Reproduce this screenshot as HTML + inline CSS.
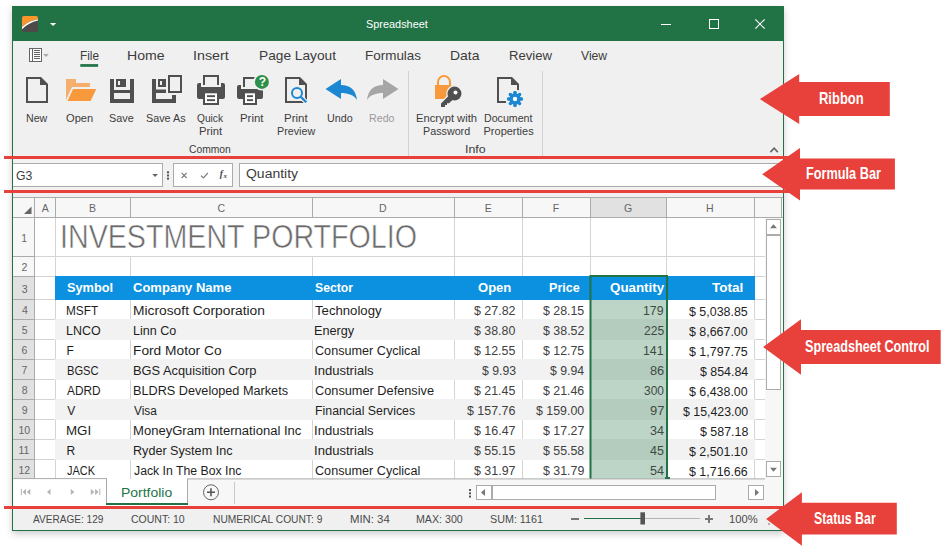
<!DOCTYPE html>
<html lang="en"><head><meta charset="utf-8"><title>Spreadsheet</title>
<style>
html,body{margin:0;padding:0;background:#fff;}
body{width:944px;height:550px;position:relative;overflow:hidden;font-family:"Liberation Sans",sans-serif;}
.t{position:absolute;white-space:pre;transform-origin:0 0;}
.r{position:absolute;}
svg{position:absolute;left:0;top:0;overflow:visible;}
</style></head><body>
<div class="r" style="left:12px;top:6px;width:772px;height:525px;background:#f0f0f0;box-shadow:0 3px 7px rgba(0,0,0,0.2);"></div>
<div class="r" style="left:12px;top:6px;width:772px;height:35px;background:#217346;"></div>
<div class="r" style="left:12px;top:41px;width:1px;height:490px;background:#217346;"></div>
<div class="r" style="left:783px;top:41px;width:1px;height:490px;background:#217346;"></div>
<div class="r" style="left:12px;top:530px;width:772px;height:1px;background:#217346;"></div>
<div id="titlebar">
<span class="t" style="left:365.81px;top:19.25px;font-size:11.4px;line-height:11.4px;color:#ffffff;transform:scaleX(0.9568);">Spreadsheet</span>
</div><div id="ribbon">
<span class="t" style="left:79.56px;top:48.76px;font-size:13.4px;line-height:13.4px;color:#3c3c3c;transform:scaleX(0.8794);">File</span>
<span class="t" style="left:127.17px;top:48.76px;font-size:13.4px;line-height:13.4px;color:#3c3c3c;transform:scaleX(1.0518);">Home</span>
<span class="t" style="left:193.11px;top:48.76px;font-size:13.4px;line-height:13.4px;color:#3c3c3c;transform:scaleX(1.0674);">Insert</span>
<span class="t" style="left:258.60px;top:48.76px;font-size:13.4px;line-height:13.4px;color:#3c3c3c;transform:scaleX(1.0243);">Page Layout</span>
<span class="t" style="left:365.32px;top:48.76px;font-size:13.4px;line-height:13.4px;color:#3c3c3c;transform:scaleX(1.0048);">Formulas</span>
<span class="t" style="left:450.28px;top:48.76px;font-size:13.4px;line-height:13.4px;color:#3c3c3c;transform:scaleX(1.0440);">Data</span>
<span class="t" style="left:508.95px;top:48.76px;font-size:13.4px;line-height:13.4px;color:#3c3c3c;transform:scaleX(0.9795);">Review</span>
<span class="t" style="left:581.34px;top:48.76px;font-size:13.4px;line-height:13.4px;color:#3c3c3c;transform:scaleX(0.9080);">View</span>
<svg width="944" height="550"><rect x="80.3" y="64.1" width="17.8" height="2.7" fill="#217346"/></svg>
<span class="t" style="left:25.75px;top:113.09px;font-size:11px;line-height:11px;color:#3c3c3c;transform:scaleX(0.9681);">New</span>
<span class="t" style="left:66.10px;top:113.09px;font-size:11px;line-height:11px;color:#3c3c3c;transform:scaleX(1.0084);">Open</span>
<span class="t" style="left:108.81px;top:113.09px;font-size:11px;line-height:11px;color:#3c3c3c;transform:scaleX(0.9838);">Save</span>
<span class="t" style="left:146.11px;top:113.09px;font-size:11px;line-height:11px;color:#3c3c3c;transform:scaleX(0.9825);">Save As</span>
<span class="t" style="left:197.34px;top:113.09px;font-size:11px;line-height:11px;color:#3c3c3c;transform:scaleX(0.9272);">Quick</span>
<span class="t" style="left:198.60px;top:126.09px;font-size:11px;line-height:11px;color:#3c3c3c;transform:scaleX(1.0245);">Print</span>
<span class="t" style="left:240.49px;top:113.09px;font-size:11px;line-height:11px;color:#3c3c3c;transform:scaleX(1.0383);">Print</span>
<span class="t" style="left:284.48px;top:113.09px;font-size:11px;line-height:11px;color:#3c3c3c;transform:scaleX(1.0429);">Print</span>
<span class="t" style="left:276.74px;top:126.09px;font-size:11px;line-height:11px;color:#3c3c3c;transform:scaleX(0.9770);">Preview</span>
<span class="t" style="left:326.69px;top:113.09px;font-size:11px;line-height:11px;color:#3c3c3c;transform:scaleX(0.9790);">Undo</span>
<span class="t" style="left:415.50px;top:113.09px;font-size:11px;line-height:11px;color:#3c3c3c;transform:scaleX(1.0189);">Encrypt with</span>
<span class="t" style="left:422.54px;top:126.09px;font-size:11px;line-height:11px;color:#3c3c3c;transform:scaleX(0.9765);">Password</span>
<span class="t" style="left:483.85px;top:113.09px;font-size:11px;line-height:11px;color:#3c3c3c;transform:scaleX(0.9660);">Document</span>
<span class="t" style="left:483.52px;top:126.09px;font-size:11px;line-height:11px;color:#3c3c3c;">Properties</span>
<span class="t" style="left:189.18px;top:144.09px;font-size:11px;line-height:11px;color:#3c3c3c;transform:scaleX(0.9368);">Common</span>
<span class="t" style="left:464.89px;top:144.09px;font-size:11px;line-height:11px;color:#3c3c3c;transform:scaleX(1.1253);">Info</span>
<span class="t" style="left:368.85px;top:113.09px;font-size:11px;line-height:11px;color:#9a9a9a;transform:scaleX(0.9692);">Redo</span>
<div class="r" style="left:408px;top:71px;width:1px;height:85px;background:#d2d2d2;"></div>
<div class="r" style="left:542px;top:71px;width:1px;height:85px;background:#d2d2d2;"></div>
<svg width="944" height="550"><g><clipPath id="lg"><rect x="22" y="16" width="16" height="16" rx="1.8"/></clipPath><g clip-path="url(#lg)"><rect x="21" y="15" width="18" height="18" fill="#4d4b4a"/><path d="M21,15 H39 V19.2 Q27.5,21 21,28 Z" fill="#f8952b"/><path d="M21,28 Q27.5,21 39,19.1 V20.3 Q28.5,22.2 21,30.2 Z" fill="#fff"/></g></g><path d="M50,23 H56.2 L53.1,26.1 Z" fill="#fff"/><g stroke="#fff" stroke-width="1" fill="none"><path d="M661,24.5 H671"/><rect x="709.5" y="19.5" width="9" height="9"/><path d="M755.3,19.3 L764.7,28.7 M764.7,19.3 L755.3,28.7" stroke-width="1.1"/></g><g><rect x="29.5" y="48.5" width="12" height="13" fill="#fff" stroke="#666" stroke-width="1"/><rect x="32" y="49" width="1" height="12" fill="#666"/><rect x="34" y="50" width="6" height="1" fill="#666"/><rect x="34" y="52" width="6" height="1" fill="#666"/><rect x="34" y="54" width="6" height="1" fill="#666"/><rect x="34" y="56" width="6" height="1" fill="#666"/><rect x="34" y="58" width="6" height="1" fill="#666"/><path d="M43.2,54 H48.8 L46,57 Z" fill="#a8a8a8"/></g><path d="M26,77 H41 L48,84 V103 H26 Z" fill="#505050"/><path d="M28,79 H40 V85 H46 V101 H28 Z" fill="#f0f0f0"/><path d="M66,79 H76 V83 H90 V87 H72 L66,100 Z" fill="#f5ae6c"/><path d="M73,89 H96.3 L90.6,101 H67.5 Z" fill="#f89a3c"/><rect x="110" y="79" width="24" height="24" fill="#505050"/><g fill="#f0f0f0"><rect x="114" y="79" width="2" height="11"/><rect x="126" y="79" width="4" height="11"/><rect x="116" y="87" width="10" height="3"/><rect x="118" y="81" width="2" height="4"/><rect x="114" y="93" width="16" height="6"/></g><g fill="#505050"><rect x="152" y="79" width="4" height="24"/><rect x="158" y="79" width="8" height="8"/><rect x="152" y="89.5" width="14" height="3.5"/><rect x="152" y="99" width="24" height="4"/><rect x="172" y="95" width="4" height="8"/></g><rect x="160" y="81" width="2" height="4" fill="#f0f0f0"/><rect x="169" y="76" width="12" height="16" fill="#f0f0f0" stroke="#505050" stroke-width="2"/><path d="M204,85 V76 H218 V85" fill="none" stroke="#505050" stroke-width="2"/><path d="M199,83 H201 V87 H221 V83 H223 a2,2 0 0 1 2,2 V97 a2,2 0 0 1 -2,2 H199 a2,2 0 0 1 -2,-2 V85 a2,2 0 0 1 2,-2 Z" fill="#505050"/><rect x="203" y="93" width="16" height="12" fill="#505050"/><rect x="205" y="93.3" width="12" height="9.7" fill="#fff"/><rect x="207" y="95.2" width="8" height="1.9" fill="#505050"/><rect x="207" y="99.2" width="8" height="1.9" fill="#505050"/><path d="M244,87 V78 H258" fill="none" stroke="#505050" stroke-width="2"/><path d="M239,85 H241 V89 H263 V97 a2,2 0 0 1 -2,2 H239 a2,2 0 0 1 -2,-2 V87 a2,2 0 0 1 2,-2 Z" fill="#505050"/><rect x="243" y="93" width="14" height="12" fill="#505050"/><rect x="245" y="93.3" width="10" height="9.7" fill="#fff"/><rect x="247" y="95.2" width="6" height="1.9" fill="#505050"/><rect x="247" y="99.2" width="6" height="1.9" fill="#505050"/><circle cx="261.9" cy="81.9" r="8.6" fill="#f0f0f0"/><circle cx="261.9" cy="81.9" r="7" fill="#2e9048"/><path d="M285,77 H300 L307,84 V103 H285 Z" fill="#505050"/><path d="M287,79 H299 V85 H305 V101 H287 Z" fill="#f0f0f0"/><g fill="none" stroke="#f0f0f0" stroke-width="4.6"><circle cx="297" cy="93" r="5"/><path d="M300.7,96.7 L306.3,102.3" stroke-linecap="round"/></g><g fill="none" stroke="#1c87d2" stroke-width="2"><circle cx="297" cy="93" r="5" fill="#f0f0f0"/><path d="M300.7,96.7 L306.3,102.3" stroke-width="2.3"/></g><path d="M325.5,89 L341,79 V85 C350,85 356,90 357,100 C354,95 348,93 341,93 V99 Z" fill="#1c87d2"/><path d="M325.5,89 L341,79 V85 C350,85 356,90 357,100 C354,95 348,93 341,93 V99 Z" fill="#a6a6a6" transform="translate(724,0) scale(-1,1)"/><rect x="435" y="85" width="16.5" height="14" fill="#f89a3c"/><path d="M438,86 V82 a6,6 0 0 1 12,0 V86" fill="none" stroke="#f89a3c" stroke-width="2"/><g fill="#f0f0f0" stroke="#f0f0f0" stroke-width="2.6"><circle cx="454.5" cy="93.6" r="7"/><path d="M441,107 V103.5 L449.5,95 L453.5,99 L449,103.3 H447 V105 H445 V107 Z"/></g><g fill="#505050"><circle cx="454.5" cy="93.6" r="7"/><path d="M441,107 V103.5 L449.5,95 L453.5,99 L449,103.3 H447 V105 H445 V107 Z"/></g><circle cx="455.5" cy="92.4" r="2" fill="#fff"/><path d="M497,77 H512 L519,84 V103 H497 Z" fill="#505050"/><path d="M499,79 H511 V85 H517 V101 H499 Z" fill="#f0f0f0"/><circle cx="515" cy="99" r="9.6" fill="#f0f0f0"/><g fill="#1c87d2"><rect x="513.5" y="91" width="3" height="16" rx="1.2" transform="rotate(0 515 99)"/><rect x="513.5" y="91" width="3" height="16" rx="1.2" transform="rotate(45 515 99)"/><rect x="513.5" y="91" width="3" height="16" rx="1.2" transform="rotate(90 515 99)"/><rect x="513.5" y="91" width="3" height="16" rx="1.2" transform="rotate(135 515 99)"/><rect x="513.5" y="91" width="3" height="16" rx="1.2" transform="rotate(180 515 99)"/><rect x="513.5" y="91" width="3" height="16" rx="1.2" transform="rotate(225 515 99)"/><rect x="513.5" y="91" width="3" height="16" rx="1.2" transform="rotate(270 515 99)"/><rect x="513.5" y="91" width="3" height="16" rx="1.2" transform="rotate(315 515 99)"/><circle cx="515" cy="99" r="5.8"/></g><circle cx="515" cy="99" r="2.2" fill="#fff"/><path d="M770.4,152.1 L774.1,148.2 L777.8,152.1" fill="none" stroke="#666" stroke-width="1.6"/></svg>
<span class="t" style="left:258.76px;top:76.04px;font-size:12px;line-height:12px;color:#fff;font-weight:bold;">?</span>
</div><div id="formula-bar">
<div class="r" style="left:13px;top:159px;width:770px;height:31px;background:#f2f2f2;"></div>
<div class="r" style="left:13px;top:163px;width:150px;height:24px;background:#fff;border:1px solid #ababab;border-left:none;box-sizing:border-box;"></div>
<div class="r" style="left:173px;top:163px;width:60px;height:24px;background:#fff;border:1px solid #ababab;box-sizing:border-box;"></div>
<div class="r" style="left:239px;top:163px;width:544px;height:24px;background:#fff;border:1px solid #ababab;border-right:none;box-sizing:border-box;"></div>
<span class="t" style="left:16.39px;top:169.84px;font-size:12px;line-height:12px;color:#3c3c3c;transform:scaleX(1.0174);">G3</span>
<svg width="944" height="550"><path d="M152.2,174 H158 L155.1,177 Z" fill="#666"/><g fill="#555"><rect x="167" y="171.3" width="2" height="2"/><rect x="167" y="174.5" width="2" height="2"/><rect x="167" y="177.6" width="2" height="2"/></g><g fill="none" stroke="#7c7c7c" stroke-width="1.15"><path d="M181.6,172.9 L186.7,178 M186.7,172.9 L181.6,178"/><path d="M201,175.6 L203.4,178 L207.9,173"/></g></svg>
<span class="t" style="left:219.8px;top:169.3px;font-size:9.5px;line-height:10px;color:#444;font-family:'Liberation Serif',serif;font-style:italic;font-weight:bold;">f</span>
<span class="t" style="left:223.4px;top:172.2px;font-size:7px;line-height:8px;color:#444;font-family:'Liberation Serif',serif;font-style:italic;font-weight:bold;">x</span>
<span class="t" style="left:245.77px;top:167.59px;font-size:12.3px;line-height:12.3px;color:#3c3c3c;transform:scaleX(1.1356);">Quantity</span>
</div><div id="spreadsheet">
<div class="r" style="left:13px;top:193px;width:770px;height:4px;background:#f0f0f0;"></div>
<div class="r" style="left:13px;top:197px;width:770px;height:282px;background:#ffffff;"></div>
<div class="r" style="left:13px;top:197px;width:770px;height:1px;background:#ababab;"></div>
<div class="r" style="left:13px;top:198px;width:769px;height:19px;background:#f7f7f7;"></div>
<div class="r" style="left:13px;top:217px;width:21px;height:262px;background:#f7f7f7;"></div>
<div class="r" style="left:591px;top:198px;width:75px;height:19px;background:#e1e1e1;"></div>
<div class="r" style="left:13px;top:277px;width:21px;height:202px;background:#e1e1e1;"></div>
<div class="r" style="left:13px;top:217px;width:770px;height:1px;background:#ababab;"></div>
<div class="r" style="left:34px;top:198px;width:1px;height:281px;background:#ababab;"></div>
<div class="r" style="left:781px;top:197px;width:1px;height:21px;background:#ababab;"></div>
<div class="r" style="left:765px;top:218px;width:18px;height:261px;background:#f7f7f7;"></div>
<div class="r" style="left:55px;top:198px;width:1px;height:19px;background:#ababab;"></div>
<div class="r" style="left:55px;top:218px;width:1px;height:261px;background:#d4d4d4;"></div>
<div class="r" style="left:130px;top:198px;width:1px;height:19px;background:#ababab;"></div>
<div class="r" style="left:130px;top:218px;width:1px;height:261px;background:#d4d4d4;"></div>
<div class="r" style="left:312px;top:198px;width:1px;height:19px;background:#ababab;"></div>
<div class="r" style="left:312px;top:218px;width:1px;height:261px;background:#d4d4d4;"></div>
<div class="r" style="left:454px;top:198px;width:1px;height:19px;background:#ababab;"></div>
<div class="r" style="left:454px;top:218px;width:1px;height:261px;background:#d4d4d4;"></div>
<div class="r" style="left:522px;top:198px;width:1px;height:19px;background:#ababab;"></div>
<div class="r" style="left:522px;top:218px;width:1px;height:261px;background:#d4d4d4;"></div>
<div class="r" style="left:590px;top:198px;width:1px;height:19px;background:#ababab;"></div>
<div class="r" style="left:590px;top:218px;width:1px;height:261px;background:#d4d4d4;"></div>
<div class="r" style="left:666px;top:198px;width:1px;height:19px;background:#ababab;"></div>
<div class="r" style="left:666px;top:218px;width:1px;height:261px;background:#d4d4d4;"></div>
<div class="r" style="left:754px;top:198px;width:1px;height:19px;background:#ababab;"></div>
<div class="r" style="left:754px;top:218px;width:1px;height:261px;background:#d4d4d4;"></div>
<div class="r" style="left:35px;top:256px;width:730px;height:1px;background:#d4d4d4;"></div>
<div class="r" style="left:13px;top:256px;width:21px;height:1px;background:#ababab;"></div>
<div class="r" style="left:35px;top:276px;width:730px;height:1px;background:#d4d4d4;"></div>
<div class="r" style="left:13px;top:276px;width:21px;height:1px;background:#ababab;"></div>
<div class="r" style="left:35px;top:299px;width:730px;height:1px;background:#d4d4d4;"></div>
<div class="r" style="left:13px;top:299px;width:21px;height:1px;background:#ababab;"></div>
<div class="r" style="left:35px;top:319px;width:730px;height:1px;background:#d4d4d4;"></div>
<div class="r" style="left:13px;top:319px;width:21px;height:1px;background:#ababab;"></div>
<div class="r" style="left:35px;top:339px;width:730px;height:1px;background:#d4d4d4;"></div>
<div class="r" style="left:13px;top:339px;width:21px;height:1px;background:#ababab;"></div>
<div class="r" style="left:35px;top:359px;width:730px;height:1px;background:#d4d4d4;"></div>
<div class="r" style="left:13px;top:359px;width:21px;height:1px;background:#ababab;"></div>
<div class="r" style="left:35px;top:379px;width:730px;height:1px;background:#d4d4d4;"></div>
<div class="r" style="left:13px;top:379px;width:21px;height:1px;background:#ababab;"></div>
<div class="r" style="left:35px;top:399px;width:730px;height:1px;background:#d4d4d4;"></div>
<div class="r" style="left:13px;top:399px;width:21px;height:1px;background:#ababab;"></div>
<div class="r" style="left:35px;top:419px;width:730px;height:1px;background:#d4d4d4;"></div>
<div class="r" style="left:13px;top:419px;width:21px;height:1px;background:#ababab;"></div>
<div class="r" style="left:35px;top:439px;width:730px;height:1px;background:#d4d4d4;"></div>
<div class="r" style="left:13px;top:439px;width:21px;height:1px;background:#ababab;"></div>
<div class="r" style="left:35px;top:459px;width:730px;height:1px;background:#d4d4d4;"></div>
<div class="r" style="left:13px;top:459px;width:21px;height:1px;background:#ababab;"></div>
<div class="r" style="left:56px;top:218px;width:360px;height:38px;background:#ffffff;"></div>
<div class="r" style="left:55px;top:276px;width:700px;height:24px;background:#0c90e0;"></div>
<div class="r" style="left:55px;top:319px;width:700px;height:21px;background:#f2f2f2;"></div>
<div class="r" style="left:55px;top:359px;width:700px;height:21px;background:#f2f2f2;"></div>
<div class="r" style="left:55px;top:399px;width:700px;height:21px;background:#f2f2f2;"></div>
<div class="r" style="left:55px;top:439px;width:700px;height:21px;background:#f2f2f2;"></div>
<span class="t" style="left:41.85px;top:202.51px;font-size:10.5px;line-height:10.5px;color:#666666;">A</span>
<span class="t" style="left:88.91px;top:202.51px;font-size:10.5px;line-height:10.5px;color:#666666;">B</span>
<span class="t" style="left:217.47px;top:202.51px;font-size:10.5px;line-height:10.5px;color:#666666;">C</span>
<span class="t" style="left:378.91px;top:202.51px;font-size:10.5px;line-height:10.5px;color:#666666;">D</span>
<span class="t" style="left:484.66px;top:202.51px;font-size:10.5px;line-height:10.5px;color:#666666;">E</span>
<span class="t" style="left:552.66px;top:202.51px;font-size:10.5px;line-height:10.5px;color:#666666;">F</span>
<span class="t" style="left:624.08px;top:202.51px;font-size:10.5px;line-height:10.5px;color:#666666;">G</span>
<span class="t" style="left:705.91px;top:202.51px;font-size:10.5px;line-height:10.5px;color:#666666;">H</span>
<svg width="944" height="550"><path d="M31.5,206.5 V214 H24 Z" fill="#666"/></svg>
<span class="t" style="left:21.31px;top:232.61px;font-size:10.5px;line-height:10.5px;color:#666666;">1</span>
<span class="t" style="left:21.58px;top:261.61px;font-size:10.5px;line-height:10.5px;color:#666666;">2</span>
<span class="t" style="left:21.68px;top:283.61px;font-size:10.5px;line-height:10.5px;color:#666666;">3</span>
<span class="t" style="left:21.89px;top:304.81px;font-size:10.5px;line-height:10.5px;color:#666666;">4</span>
<span class="t" style="left:21.68px;top:324.81px;font-size:10.5px;line-height:10.5px;color:#666666;">5</span>
<span class="t" style="left:21.58px;top:344.81px;font-size:10.5px;line-height:10.5px;color:#666666;">6</span>
<span class="t" style="left:21.58px;top:364.81px;font-size:10.5px;line-height:10.5px;color:#666666;">7</span>
<span class="t" style="left:21.63px;top:384.81px;font-size:10.5px;line-height:10.5px;color:#666666;">8</span>
<span class="t" style="left:21.63px;top:404.81px;font-size:10.5px;line-height:10.5px;color:#666666;">9</span>
<span class="t" style="left:18.41px;top:424.81px;font-size:10.5px;line-height:10.5px;color:#666666;">10</span>
<span class="t" style="left:18.41px;top:444.81px;font-size:10.5px;line-height:10.5px;color:#666666;">11</span>
<span class="t" style="left:18.41px;top:464.81px;font-size:10.5px;line-height:10.5px;color:#666666;">12</span>
<span class="t" style="left:60.42px;top:219.57px;font-size:33px;line-height:33px;color:#6a6a6a;-webkit-text-stroke:0.55px #fff;transform-origin:0 0;transform:scaleX(0.8679);">INVESTMENT PORTFOLIO</span>
<span class="t" style="left:67.22px;top:282.34px;font-size:12px;line-height:12px;color:#ffffff;transform:scaleX(1.0645);font-weight:bold;">Symbol</span>
<span class="t" style="left:133.18px;top:282.34px;font-size:12px;line-height:12px;color:#ffffff;transform:scaleX(1.0851);font-weight:bold;">Company Name</span>
<span class="t" style="left:315.13px;top:282.34px;font-size:12px;line-height:12px;color:#ffffff;transform:scaleX(1.0179);font-weight:bold;">Sector</span>
<span class="t" style="left:478.08px;top:282.34px;font-size:12px;line-height:12px;color:#ffffff;transform:scaleX(1.0862);font-weight:bold;">Open</span>
<span class="t" style="left:548.88px;top:282.34px;font-size:12px;line-height:12px;color:#ffffff;transform:scaleX(1.0483);font-weight:bold;">Price</span>
<span class="t" style="left:609.97px;top:282.34px;font-size:12px;line-height:12px;color:#ffffff;transform:scaleX(1.1118);font-weight:bold;">Quantity</span>
<span class="t" style="left:711.66px;top:282.34px;font-size:12px;line-height:12px;color:#ffffff;transform:scaleX(1.1260);font-weight:bold;">Total</span>
<span class="t" style="left:66.46px;top:304.74px;font-size:12px;line-height:12px;color:#1e1e1e;transform:scaleX(0.9828);">MSFT</span>
<span class="t" style="left:132.60px;top:304.74px;font-size:12px;line-height:12px;color:#1e1e1e;transform:scaleX(1.1498);">Microsoft Corporation</span>
<span class="t" style="left:315.24px;top:304.74px;font-size:12px;line-height:12px;color:#1e1e1e;transform:scaleX(1.0962);">Technology</span>
<span class="t" style="left:474.38px;top:304.74px;font-size:12px;line-height:12px;color:#404040;transform:scaleX(1.0356);">$ 27.82</span>
<span class="t" style="left:542.68px;top:304.74px;font-size:12px;line-height:12px;color:#404040;transform:scaleX(1.0299);">$ 28.15</span>
<span class="t" style="left:689.38px;top:305.74px;font-size:12px;line-height:12px;color:#1e1e1e;transform:scaleX(1.0357);">$ 5,038.85</span>
<span class="t" style="left:66.40px;top:324.74px;font-size:12px;line-height:12px;color:#1e1e1e;transform:scaleX(1.0377);">LNCO</span>
<span class="t" style="left:132.70px;top:324.74px;font-size:12px;line-height:12px;color:#1e1e1e;transform:scaleX(1.0451);">Linn Co</span>
<span class="t" style="left:314.49px;top:324.74px;font-size:12px;line-height:12px;color:#1e1e1e;transform:scaleX(1.0572);">Energy</span>
<span class="t" style="left:474.38px;top:324.74px;font-size:12px;line-height:12px;color:#404040;transform:scaleX(1.0309);">$ 38.80</span>
<span class="t" style="left:542.68px;top:324.74px;font-size:12px;line-height:12px;color:#404040;transform:scaleX(1.0331);">$ 38.52</span>
<span class="t" style="left:689.38px;top:325.74px;font-size:12px;line-height:12px;color:#1e1e1e;transform:scaleX(1.0345);">$ 8,667.00</span>
<span class="t" style="left:66.44px;top:344.74px;font-size:12px;line-height:12px;color:#1e1e1e;">F</span>
<span class="t" style="left:132.60px;top:344.74px;font-size:12px;line-height:12px;color:#1e1e1e;transform:scaleX(1.1449);">Ford Motor Co</span>
<span class="t" style="left:314.87px;top:344.74px;font-size:12px;line-height:12px;color:#1e1e1e;transform:scaleX(1.0523);">Consumer Cyclical</span>
<span class="t" style="left:474.38px;top:344.74px;font-size:12px;line-height:12px;color:#404040;transform:scaleX(1.0325);">$ 12.55</span>
<span class="t" style="left:542.68px;top:344.74px;font-size:12px;line-height:12px;color:#404040;transform:scaleX(1.0299);">$ 12.75</span>
<span class="t" style="left:689.38px;top:345.74px;font-size:12px;line-height:12px;color:#1e1e1e;transform:scaleX(1.0357);">$ 1,797.75</span>
<span class="t" style="left:66.51px;top:364.74px;font-size:12px;line-height:12px;color:#1e1e1e;transform:scaleX(0.9300);">BGSC</span>
<span class="t" style="left:132.67px;top:364.74px;font-size:12px;line-height:12px;color:#1e1e1e;transform:scaleX(1.0690);">BGS Acquisition Corp</span>
<span class="t" style="left:314.32px;top:364.74px;font-size:12px;line-height:12px;color:#1e1e1e;transform:scaleX(1.0898);">Industrials</span>
<span class="t" style="left:481.58px;top:364.74px;font-size:12px;line-height:12px;color:#404040;transform:scaleX(1.0226);">$ 9.93</span>
<span class="t" style="left:549.58px;top:364.74px;font-size:12px;line-height:12px;color:#404040;transform:scaleX(1.0249);">$ 9.94</span>
<span class="t" style="left:699.78px;top:365.74px;font-size:12px;line-height:12px;color:#1e1e1e;transform:scaleX(1.0325);">$ 854.84</span>
<span class="t" style="left:67.40px;top:384.74px;font-size:12px;line-height:12px;color:#1e1e1e;transform:scaleX(0.9874);">ADRD</span>
<span class="t" style="left:132.69px;top:384.74px;font-size:12px;line-height:12px;color:#1e1e1e;transform:scaleX(1.0565);">BLDRS Developed Markets</span>
<span class="t" style="left:314.86px;top:384.74px;font-size:12px;line-height:12px;color:#1e1e1e;transform:scaleX(1.0624);">Consumer Defensive</span>
<span class="t" style="left:474.38px;top:384.74px;font-size:12px;line-height:12px;color:#404040;transform:scaleX(1.0325);">$ 21.45</span>
<span class="t" style="left:542.68px;top:384.74px;font-size:12px;line-height:12px;color:#404040;transform:scaleX(1.0299);">$ 21.46</span>
<span class="t" style="left:689.38px;top:385.74px;font-size:12px;line-height:12px;color:#1e1e1e;transform:scaleX(1.0345);">$ 6,438.00</span>
<span class="t" style="left:67.34px;top:404.74px;font-size:12px;line-height:12px;color:#1e1e1e;">V</span>
<span class="t" style="left:133.64px;top:404.74px;font-size:12px;line-height:12px;color:#1e1e1e;transform:scaleX(0.9852);">Visa</span>
<span class="t" style="left:314.51px;top:404.74px;font-size:12px;line-height:12px;color:#1e1e1e;transform:scaleX(1.0281);">Financial Services</span>
<span class="t" style="left:467.38px;top:404.74px;font-size:12px;line-height:12px;color:#404040;transform:scaleX(1.0352);">$ 157.76</span>
<span class="t" style="left:535.68px;top:404.74px;font-size:12px;line-height:12px;color:#404040;transform:scaleX(1.0316);">$ 159.00</span>
<span class="t" style="left:682.88px;top:405.74px;font-size:12px;line-height:12px;color:#1e1e1e;transform:scaleX(1.0283);">$ 15,423.00</span>
<span class="t" style="left:66.33px;top:424.74px;font-size:12px;line-height:12px;color:#1e1e1e;transform:scaleX(1.1127);">MGI</span>
<span class="t" style="left:132.66px;top:424.74px;font-size:12px;line-height:12px;color:#1e1e1e;transform:scaleX(1.0881);">MoneyGram International Inc</span>
<span class="t" style="left:314.32px;top:424.74px;font-size:12px;line-height:12px;color:#1e1e1e;transform:scaleX(1.0898);">Industrials</span>
<span class="t" style="left:474.38px;top:424.74px;font-size:12px;line-height:12px;color:#404040;transform:scaleX(1.0356);">$ 16.47</span>
<span class="t" style="left:542.68px;top:424.74px;font-size:12px;line-height:12px;color:#404040;transform:scaleX(1.0331);">$ 17.27</span>
<span class="t" style="left:699.78px;top:425.74px;font-size:12px;line-height:12px;color:#1e1e1e;transform:scaleX(1.0352);">$ 587.18</span>
<span class="t" style="left:66.44px;top:444.74px;font-size:12px;line-height:12px;color:#1e1e1e;">R</span>
<span class="t" style="left:132.69px;top:444.74px;font-size:12px;line-height:12px;color:#1e1e1e;transform:scaleX(1.0501);">Ryder System Inc</span>
<span class="t" style="left:314.32px;top:444.74px;font-size:12px;line-height:12px;color:#1e1e1e;transform:scaleX(1.0898);">Industrials</span>
<span class="t" style="left:474.38px;top:444.74px;font-size:12px;line-height:12px;color:#404040;transform:scaleX(1.0325);">$ 55.15</span>
<span class="t" style="left:542.68px;top:444.74px;font-size:12px;line-height:12px;color:#404040;transform:scaleX(1.0299);">$ 55.58</span>
<span class="t" style="left:689.38px;top:445.74px;font-size:12px;line-height:12px;color:#1e1e1e;transform:scaleX(1.0345);">$ 2,501.10</span>
<span class="t" style="left:67.24px;top:464.74px;font-size:12px;line-height:12px;color:#1e1e1e;transform:scaleX(0.9124);">JACK</span>
<span class="t" style="left:133.52px;top:464.74px;font-size:12px;line-height:12px;color:#1e1e1e;transform:scaleX(1.0220);">Jack In The Box Inc</span>
<span class="t" style="left:314.87px;top:464.74px;font-size:12px;line-height:12px;color:#1e1e1e;transform:scaleX(1.0523);">Consumer Cyclical</span>
<span class="t" style="left:474.38px;top:464.74px;font-size:12px;line-height:12px;color:#404040;transform:scaleX(1.0356);">$ 31.97</span>
<span class="t" style="left:542.68px;top:464.74px;font-size:12px;line-height:12px;color:#404040;transform:scaleX(1.0315);">$ 31.79</span>
<span class="t" style="left:689.38px;top:465.74px;font-size:12px;line-height:12px;color:#1e1e1e;transform:scaleX(1.0357);">$ 1,716.66</span>
<div class="r" style="left:591px;top:300px;width:75px;height:179px;background:rgba(33,115,70,0.30);"></div>
<svg width="944" height="550"><path d="M589.5,479 V275 H668 V479 H666 V277 H591.5 V479 Z" fill="#217346"/></svg>
<span class="t" style="left:643.48px;top:304.74px;font-size:12px;line-height:12px;color:#404a44;transform:scaleX(1.0248);">179</span>
<span class="t" style="left:643.80px;top:324.74px;font-size:12px;line-height:12px;color:#404a44;transform:scaleX(1.0053);">225</span>
<span class="t" style="left:643.48px;top:344.74px;font-size:12px;line-height:12px;color:#404a44;transform:scaleX(1.0248);">141</span>
<span class="t" style="left:649.72px;top:364.74px;font-size:12px;line-height:12px;color:#404a44;transform:scaleX(1.0650);">86</span>
<span class="t" style="left:643.92px;top:384.74px;font-size:12px;line-height:12px;color:#404a44;transform:scaleX(0.9958);">300</span>
<span class="t" style="left:649.72px;top:404.74px;font-size:12px;line-height:12px;color:#404a44;transform:scaleX(1.0755);">97</span>
<span class="t" style="left:649.80px;top:424.74px;font-size:12px;line-height:12px;color:#404a44;transform:scaleX(1.0497);">34</span>
<span class="t" style="left:650.05px;top:444.74px;font-size:12px;line-height:12px;color:#404a44;transform:scaleX(1.0397);">45</span>
<span class="t" style="left:649.80px;top:464.74px;font-size:12px;line-height:12px;color:#404a44;transform:scaleX(1.0497);">54</span>
<div class="r" style="left:766px;top:219px;width:15px;height:16px;background:#fff;border:1px solid #ababab;box-sizing:border-box;"></div>
<div class="r" style="left:766px;top:235px;width:15px;height:155px;background:#fff;border:1px solid #ababab;box-sizing:border-box;"></div>
<div class="r" style="left:766px;top:461px;width:15px;height:16px;background:#fff;border:1px solid #ababab;box-sizing:border-box;"></div>
<svg width="944" height="550"><path d="M770,228.2 L773.5,224.2 L777,228.2 Z M770,467.8 L773.5,471.8 L777,467.8 Z" fill="#777"/></svg>
</div><div id="sheet-tabs">
<div class="r" style="left:13px;top:479px;width:770px;height:27px;background:#f7f7f7;"></div>
<div class="r" style="left:13px;top:479px;width:174px;height:27px;background:#ffffff;"></div>
<svg width="944" height="550"><rect x="13" y="478.1" width="94" height="1" fill="#ababab"/><rect x="187" y="478.4" width="578" height="1" fill="#ababab"/></svg>
<div class="r" style="left:106px;top:479px;width:1px;height:26px;background:#ababab;"></div>
<div class="r" style="left:665px;top:477px;width:5px;height:2px;background:#217346;"></div>
<div class="r" style="left:187px;top:479px;width:1px;height:24px;background:#ababab;"></div>
<div class="r" style="left:106px;top:503px;width:82px;height:2px;background:#217346;"></div>
<span class="t" style="left:121.38px;top:486.27px;font-size:13.5px;line-height:13.5px;color:#217346;transform:scaleX(1.0343);">Portfolio</span>
<div class="r" style="left:234px;top:482px;width:1px;height:22px;background:#c8c8c8;"></div>
<svg width="944" height="550"><circle cx="211" cy="492.3" r="7.5" fill="none" stroke="#666" stroke-width="1"/><path d="M207,492.3 H215 M211,488.3 V496.3" stroke="#555" stroke-width="1.6" fill="none"/><g fill="#b4b4b4"><rect x="20.8" y="488.7" width="1" height="6.4"/><path d="M26,488.7 V495.1 L22.5,491.9 Z M30.3,488.7 V495.1 L26.8,491.9 Z"/><path d="M50.5,488.7 V495.1 L47,491.9 Z"/><path d="M70.8,488.7 V495.1 L74.3,491.9 Z"/><path d="M90.8,488.7 V495.1 L94.3,491.9 Z M95.1,488.7 V495.1 L98.6,491.9 Z"/><rect x="99.3" y="488.7" width="1" height="6.4"/></g></svg>
<svg width="944" height="550"><g fill="#555"><rect x="469" y="489" width="2" height="2"/><rect x="469" y="492.3" width="2" height="2"/><rect x="469" y="495.6" width="2" height="2"/></g></svg>
<div class="r" style="left:476px;top:485px;width:16px;height:15px;background:#fff;border:1px solid #ababab;box-sizing:border-box;"></div>
<div class="r" style="left:492px;top:485px;width:224px;height:15px;background:#fff;border:1px solid #ababab;box-sizing:border-box;"></div>
<div class="r" style="left:748px;top:485px;width:16px;height:15px;background:#fff;border:1px solid #ababab;box-sizing:border-box;"></div>
<svg width="944" height="550"><path d="M485,489 V496 L481,492.5 Z M755,489 V496 L759,492.5 Z" fill="#777"/></svg>
</div><div id="status-bar">
<div class="r" style="left:13px;top:509px;width:770px;height:21px;background:#f0f0f0;"></div>
<span class="t" style="left:33.00px;top:514.78px;font-size:10.3px;line-height:10.3px;color:#4a4a4a;transform:scaleX(0.9793);">AVERAGE: 129</span>
<span class="t" style="left:131.37px;top:514.78px;font-size:10.3px;line-height:10.3px;color:#4a4a4a;transform:scaleX(1.0201);">COUNT: 10</span>
<span class="t" style="left:213.08px;top:514.78px;font-size:10.3px;line-height:10.3px;color:#4a4a4a;transform:scaleX(0.9939);">NUMERICAL COUNT: 9</span>
<span class="t" style="left:349.59px;top:514.78px;font-size:10.3px;line-height:10.3px;color:#4a4a4a;transform:scaleX(1.1026);">MIN: 34</span>
<span class="t" style="left:415.65px;top:514.78px;font-size:10.3px;line-height:10.3px;color:#4a4a4a;transform:scaleX(1.0333);">MAX: 300</span>
<span class="t" style="left:490.02px;top:514.78px;font-size:10.3px;line-height:10.3px;color:#4a4a4a;transform:scaleX(1.0442);">SUM: 1161</span>
<span class="t" style="left:728.66px;top:514.78px;font-size:10.3px;line-height:10.3px;color:#4a4a4a;transform:scaleX(1.0898);">100%</span>
<div class="r" style="left:571px;top:518px;width:8px;height:2px;background:#777;"></div>
<div class="r" style="left:584px;top:518px;width:57px;height:1px;background:#217346;"></div>
<div class="r" style="left:645px;top:518px;width:55px;height:1px;background:#b4b4b4;"></div>
<svg width="944" height="550"><rect x="640.4" y="512.3" width="4.6" height="12.2" fill="#555"/><path d="M705,519 H713 M709,515 V523" stroke="#777" stroke-width="2" fill="none"/></svg>
</div><div id="callouts">
<div class="r" style="left:768px;top:523px;width:2px;height:2px;background:#b0b0b0;"></div>
<div class="r" style="left:4px;top:156px;width:791px;height:3px;background:#e8403a;"></div>
<div class="r" style="left:4px;top:190px;width:791px;height:3px;background:#e8403a;"></div>
<div class="r" style="left:4px;top:506px;width:791px;height:3px;background:#e8403a;"></div>
<svg width="944" height="550"><g fill="#e8403a"><path d="M759.9,99.1 L799.2,74 V81.9 H889.8 V116 H799.2 V124.1 Z"/><path d="M762.2,174.2 L800,148 V158.5 H894.9 V189.6 H800 V200.4 Z"/><path d="M763.1,347 L801,319.2 V329.9 H940.7 V363.9 H801 V374.8 Z"/><path d="M766.1,519 L801.9,492.2 V502.8 H896.8 V534.5 H801.9 V545.8 Z"/></g></svg>
<span class="t" style="left:818.56px;top:90.09px;font-size:16.2px;line-height:16.2px;color:#fff;font-weight:bold;transform-origin:0 0;transform:scaleX(0.8014);">Ribbon</span>
<span class="t" style="left:805.87px;top:166.03px;font-size:15.8px;line-height:15.8px;color:#fff;font-weight:bold;transform-origin:0 0;transform:scaleX(0.8050);">Formula Bar</span>
<span class="t" style="left:804.72px;top:338.39px;font-size:16.2px;line-height:16.2px;color:#fff;font-weight:bold;transform-origin:0 0;transform:scaleX(0.7818);">Spreadsheet Control</span>
<span class="t" style="left:813.93px;top:511.19px;font-size:15.6px;line-height:15.6px;color:#fff;font-weight:bold;transform-origin:0 0;transform:scaleX(0.7909);">Status Bar</span>
</div>
</body></html>
